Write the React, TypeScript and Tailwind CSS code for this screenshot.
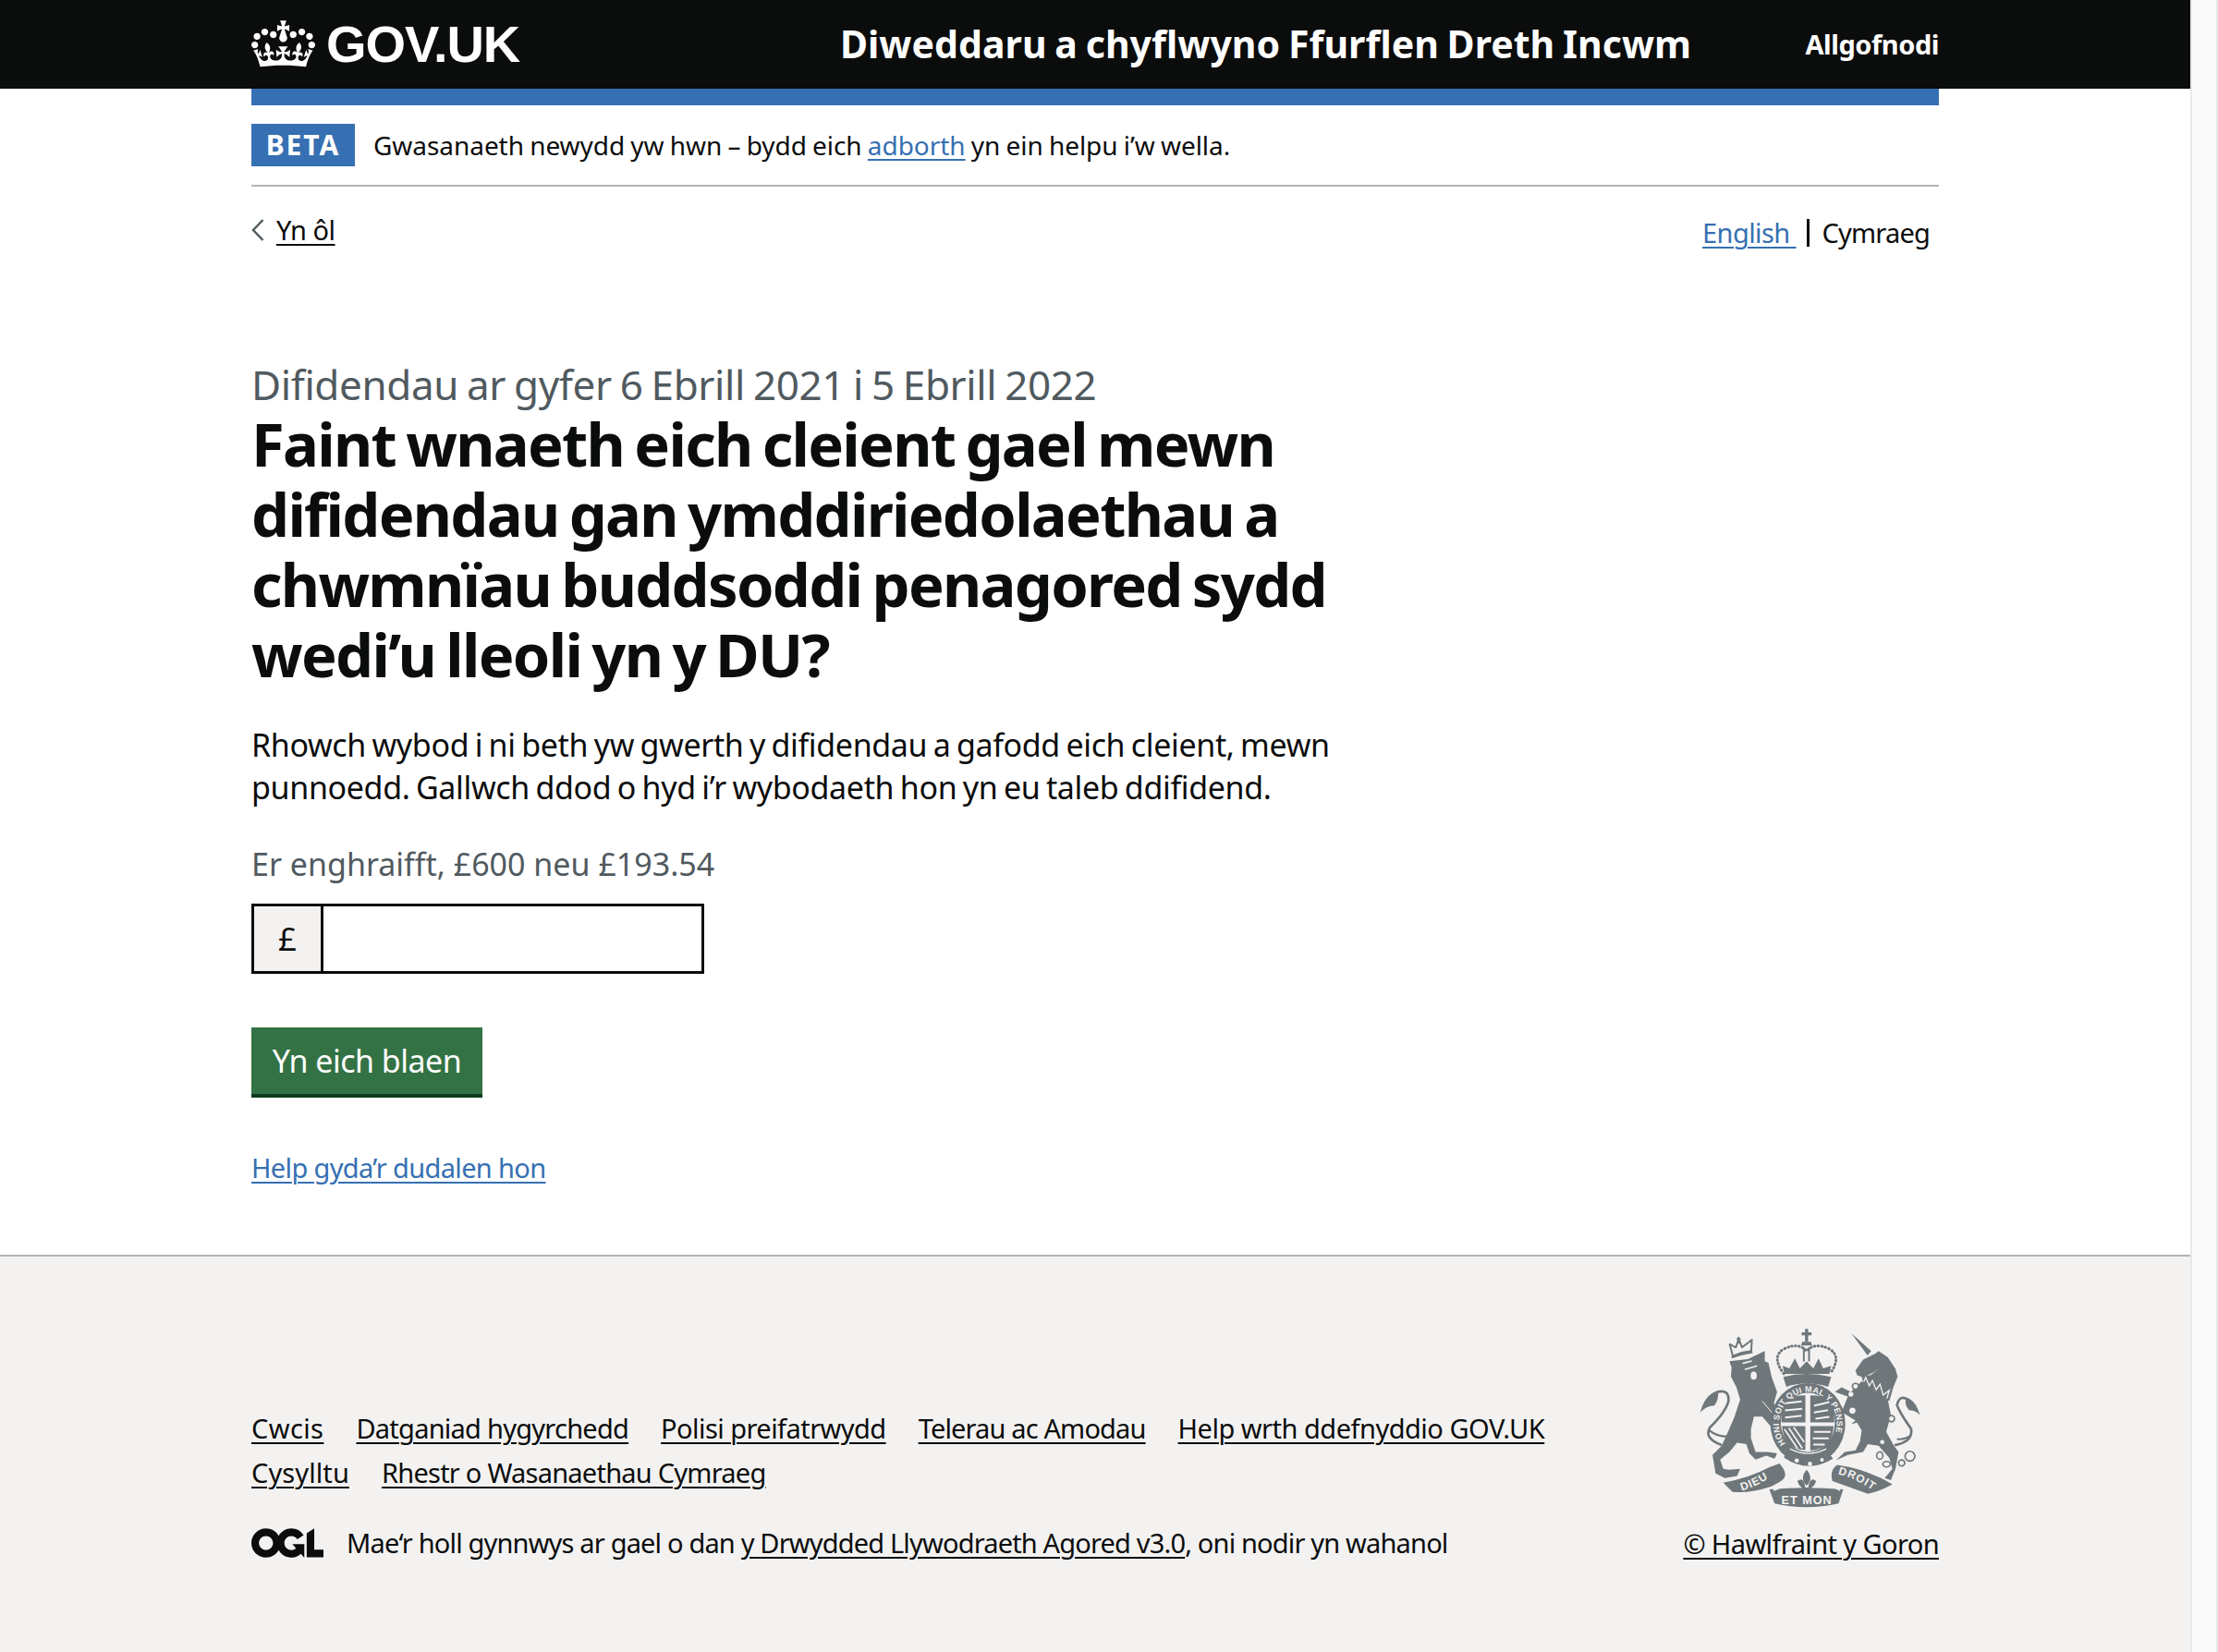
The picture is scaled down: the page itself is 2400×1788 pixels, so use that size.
import React from "react";

const FONT = "[font-family:'Noto_Sans',sans-serif]";

function Crown() {
  return (
    <svg viewBox="0 0 132 97" className="w-[69px] h-[51px] shrink-0 text-white" fill="currentColor" aria-hidden="true">
      <path d="M25 30.2c3.5 1.5 7.7-.2 9.1-3.7 1.5-3.6-.2-7.8-3.9-9.2-3.6-1.4-7.6.3-9.1 3.9-1.4 3.5.3 7.5 3.9 9zM9 39.5c3.6 1.5 7.8-.2 9.2-3.7 1.5-3.6-.2-7.8-3.9-9.1-3.6-1.5-7.6.2-9.1 3.8-1.4 3.5.3 7.5 3.8 9zM4.4 57.2c3.5 1.5 7.7-.2 9.1-3.8 1.5-3.6-.2-7.7-3.9-9.1-3.5-1.5-7.6.3-9.1 3.8-1.4 3.5.3 7.6 3.9 9.1zm38.3-21.4c3.5 1.5 7.7-.2 9.1-3.8 1.5-3.6-.2-7.7-3.9-9.1-3.6-1.5-7.6.3-9.1 3.8-1.3 3.6.4 7.7 3.9 9.1zm64.4-5.6c-3.6 1.5-7.8-.2-9.1-3.7-1.5-3.6.2-7.8 3.8-9.2 3.6-1.4 7.7.3 9.2 3.9 1.3 3.5-.4 7.5-3.9 9zm15.9 9.3c-3.6 1.5-7.7-.2-9.1-3.7-1.5-3.6.2-7.8 3.7-9.1 3.6-1.5 7.7.2 9.2 3.8 1.5 3.5-.3 7.5-3.8 9zm4.7 17.7c-3.6 1.5-7.8-.2-9.2-3.8-1.5-3.6.2-7.7 3.9-9.1 3.6-1.5 7.7.3 9.2 3.8 1.3 3.5-.4 7.6-3.9 9.1zM89.3 35.8c-3.6 1.5-7.8-.2-9.2-3.8-1.4-3.6.2-7.7 3.9-9.1 3.6-1.5 7.7.3 9.2 3.8 1.4 3.6-.3 7.7-3.9 9.1zM69.7 17.7l8.9 4.7V9.3l-8.9 2.8c-.2-.3-.5-.6-.9-.9L72.4 0H59.6l3.5 11.2c-.3.3-.6.5-.9.9l-8.8-2.8v13.1l8.8-4.7c.3.3.6.7.9.9l-5 15.4v.1c-.2.8-.4 1.6-.4 2.4 0 4.1 3.1 7.5 7 8.1h.2c.3 0 .7.1 1 .1.4 0 .7 0 1-.1h.2c4-.6 7.1-4.1 7.1-8.1 0-.8-.1-1.7-.4-2.4V34l-5.1-15.4c.4-.2.7-.6 1-.9zM66 92.8c16.9 0 32.8 1.1 47.1 3.2 4-16.9 8.9-26.7 14-33.5l-9.6-3.4c1 4.9 1.1 7.2 0 10.2-1.5-1.4-3-4.3-4.2-8.7L108.6 76c2.8-2 5-3.2 7.5-3.3-4.4 9.4-10 11.9-13.6 11.2-4.3-.8-6.3-4.6-5.6-7.9 1-4.7 5.7-5.9 8-.5 4.3-8.7-3-11.4-7.6-8.8 7.1-7.2 7.9-13.5 2.1-21.1-8 6.1-8.1 12.3-4.5 20.8-4.7-5.4-12.1-2.5-9.5 6.2 3.4-5.2 7.9-2 7.2 3.1-.6 4.3-6.4 7.8-13.5 7.2-10.3-.9-10.9-8-11.2-13.8 2.5-.5 7.1 1.8 11 7.3L80.2 60c-4.1 4.4-8 5.3-12.3 5.4 1.4-4.4 8-11.6 8-11.6H55.5s6.4 7.2 7.9 11.6c-4.2-.1-8-1-12.3-5.4l1.4 16.4c3.9-5.5 8.5-7.7 10.9-7.3-.3 5.8-.9 12.8-11.1 13.8-7.2.6-12.9-2.9-13.5-7.2-.7-5 3.8-8.3 7.1-3.1 2.7-8.7-4.6-11.6-9.4-6.2 3.7-8.5 3.6-14.7-4.6-20.8-5.8 7.6-5 13.9 2.2 21.1-4.7-2.6-11.9.1-7.7 8.8 2.3-5.5 7.1-4.2 8.1.5.7 3.3-1.3 7.1-5.7 7.9-3.5.7-9-1.8-13.5-11.2 2.5.1 4.7 1.3 7.5 3.3l-4.7-15.4c-1.2 4.4-2.7 7.2-4.3 8.7-1.1-3-.9-5.3 0-10.2l-9.5 3.4c5 6.9 9.9 16.7 14 33.5 14.8-2.1 30.8-3.2 47.7-3.2z" />
    </svg>
  );
}

function Ogl() {
  return (
    <svg viewBox="0 0 483.2 195.7" className="w-[78px] h-[32px] shrink-0 text-[#0b0c0c]" fill="currentColor" aria-hidden="true">
      <path d="M421.5 142.8V.1l-50.7 32.3v161.1h112.4v-50.7zm-122.3-9.6A47.12 47.12 0 0 1 221 97.8c0-26 21.1-47.1 47.1-47.1 16.7 0 31.4 8.7 39.7 21.8l42.7-27.2A97.63 97.63 0 0 0 268.1 0c-36.5 0-68.3 20.1-85.1 49.7A98 98 0 0 0 97.8 0C43.9 0 0 43.9 0 97.8s43.9 97.8 97.8 97.8c36.5 0 68.3-20.1 85.1-49.7a97.76 97.76 0 0 0 149.6 25.4l19.4 22.2h3v-87.8h-80l24.3 27.5zM97.8 145c-26 0-47.1-21.1-47.1-47.1s21.1-47.1 47.1-47.1 47.2 21 47.2 47S123.8 145 97.8 145" />
    </svg>
  );
}

function RoyalArms() {
  const g = "#6f777b";
  const bg = "#f3f2f1";
  const fam = "Liberation Sans, sans-serif";
  return (
    <svg viewBox="118 76 718 586" className="w-[239px] h-[195px] shrink-0 mr-[20px]" aria-hidden="true">
      {/* lion, coordinates of the left half */}
      <g transform="translate(90 60)">
        <path d="M136 108 L126 70 L146 80 L155 52 L166 80 L190 62 L198 55 L196 92 Q165 95 136 108 Z" fill="none" stroke={g} strokeWidth="6" strokeLinejoin="round" />
        <path d="M155 45 V68 M148 52 H162" stroke={g} strokeWidth="5" fill="none" />
        <path d="M132 113 Q165 100 200 95" fill="none" stroke={g} strokeWidth="7" />
        <path fill={g} d="M125 125 L185 118 L240 92 L240 125 L252 130 L262 175 L280 225 L270 260 L300 340 L305 375 L280 370 L262 340 L232 305 L205 305 L195 345 L195 375 L210 420 L250 420 L280 425 L272 442 L245 432 L210 445 L190 425 L180 395 L150 390 L125 420 L95 445 L105 475 L125 478 L160 475 L150 498 L110 505 L80 490 L70 430 L100 400 L118 360 L140 310 L160 250 L148 210 L130 175 L132 145 Z" />
        <path d="M168 132 L198 124 M175 152 L215 140" stroke={bg} strokeWidth="5" fill="none" />
        <ellipse cx="204" cy="172" rx="10" ry="13" fill={bg} />
        <path d="M232 255 L270 300 M268 300 L300 345" stroke={bg} strokeWidth="3" fill="none" />
        <path d="M100 398 Q40 375 62 340 Q112 292 122 255 Q125 215 85 225" fill="none" stroke={g} strokeWidth="8" />
        <path d="M60 350 Q85 372 125 370" fill="none" stroke={g} strokeWidth="7" />
        <path fill={g} d="M88 220 Q45 232 30 292 Q50 270 75 270 Q92 250 88 220 Z" />
      </g>

      {/* crown over the shield */}
      <path d="M466 80 V122 M450 96 H482" stroke={g} strokeWidth="10" fill="none" />
      <path d="M452 122 H480 L484 134 H448 Z" fill={g} />
      <path d="M392 226 Q350 170 392 145 Q440 122 466 152 Q492 122 540 145 Q582 170 542 226" fill="none" stroke={g} strokeWidth="9" strokeDasharray="2 10" strokeLinecap="round" />
      <path d="M457 140 V186 M474 140 V186" stroke={g} strokeWidth="6" />
      <path fill={g} d="M394 226 L388 200 L410 208 L428 176 L444 208 L466 186 L488 208 L505 176 L520 208 L546 200 L540 226 Z" />
      <path fill={g} d="M390 236 Q465 216 546 236 L536 268 Q465 246 400 268 Z" />

      {/* garter and shield */}
      <ellipse cx="470" cy="388" rx="122" ry="132" fill={g} />
      <ellipse cx="470" cy="384" rx="88" ry="96" fill={bg} />
      <path fill={g} d="M390 312 Q420 296 462 296 V384 H384 Q384 340 390 312 Z M478 296 Q520 296 548 312 Q556 340 556 384 H478 Z M386 396 H462 V474 Q425 474 402 448 Q388 425 386 396 Z M478 396 H554 Q552 425 538 448 Q515 474 478 476 Z" />
      <path d="M398 322 L450 316 M396 345 L452 340 M396 368 L450 362 M490 330 L540 318 M490 352 L536 344 M495 372 L540 366 M490 415 H544 M486 436 H538 M488 456 H525" stroke={bg} strokeWidth="6" fill="none" />
      <path d="M408 402 L452 468 M394 406 L436 468 M424 400 L458 448" stroke={bg} strokeWidth="5" fill="none" />
      <path id="garter" d="M398 453 A94 102 0 1 1 542 453" fill="none" />
      <text fontFamily={fam} fontWeight="700" fontSize="27" fill={bg} letterSpacing="1">
        <textPath href="#garter" startOffset="0%">HONI SOIT QUI MAL Y PENSE</textPath>
      </text>
      <path fill={g} d="M402 476 Q470 512 534 478 L552 502 Q470 552 392 498 Z" />
      <circle cx="434" cy="508" r="7" fill={bg} /><circle cx="477" cy="519" r="7" fill={bg} /><circle cx="516" cy="506" r="6" fill={bg} />
      <path d="M412 470 Q470 500 530 470" stroke={bg} strokeWidth="4" fill="none" />

      {/* unicorn, coordinates of the right half */}
      <g transform="translate(450 60)">
        <path fill={g} d="M162 35 L226 92 L214 106 Z" />
        <path fill={g} d="M175 155 L200 120 L240 100 L250 92 L280 112 L305 150 L312 175 L298 210 L285 255 L200 195 L195 175 L225 170 L255 145 L235 160 L200 178 L180 170 Z" />
        <path fill={g} d="M195 190 L280 250 L290 300 L275 355 L300 400 L315 420 L305 475 L290 512 L270 505 L295 475 L285 440 L250 400 L215 395 L200 420 L150 430 L112 447 L140 420 L175 415 L190 385 L195 350 L180 325 L160 330 L175 318 L130 290 L150 240 L108 225 L130 210 L160 225 Z" />
        <path d="M202 192 L208 178 L220 205 L230 188 L242 218 L255 200 L265 235 L285 220 L277 246" stroke={bg} strokeWidth="4" fill="none" />
        <circle cx="175" cy="207" r="10" fill={bg} stroke={g} strokeWidth="5" />
        <circle cx="160" cy="232" r="8" fill={bg} />
        <circle cx="165" cy="286" r="10" fill={bg} />
        <circle cx="292" cy="312" r="10" fill={bg} stroke={g} strokeWidth="5" />
        <circle cx="284" cy="354" r="7" fill={bg} />
        <circle cx="262" cy="388" r="7" fill={bg} />
        <g fill="none" stroke={g} strokeWidth="5">
          <ellipse cx="254" cy="432" rx="10" ry="12" />
          <ellipse cx="276" cy="460" rx="12" ry="9" />
          <ellipse cx="325" cy="456" rx="10" ry="10" />
          <circle cx="352" cy="434" r="16" />
        </g>
        <path d="M302 398 Q362 388 356 345 Q320 295 310 268 Q318 232 345 250" fill="none" stroke={g} strokeWidth="8" />
        <path d="M310 378 Q335 382 356 365" fill="none" stroke={g} strokeWidth="6" />
        <path fill={g} d="M340 243 Q372 252 384 300 Q368 283 350 285 Q332 265 340 243 Z" />
        {/* droit ribbon */}
        <path fill={g} d="M115 462 Q210 475 295 525 Q250 550 215 556 L100 515 Q90 480 115 462 Z" />
      </g>

      {/* motto */}
      <g transform="translate(90 60)">
        <path fill={g} d="M105 520 Q190 505 255 470 L288 458 Q325 500 288 518 L262 532 Q190 556 135 550 Z" />
      </g>
      <path fill={g} d="M345 602 Q465 592 585 602 L570 648 Q465 672 362 648 Z" />
      <path d="M358 604 Q392 596 402 566 M575 604 Q540 590 534 560" stroke={bg} strokeWidth="6" fill="none" />
      <path id="m1" d="M255 606 Q310 590 358 554" fill="none" />
      <path id="m2" d="M568 553 Q630 566 690 612" fill="none" />
      <text fontFamily={fam} fontWeight="700" fontSize="36" fill={bg} letterSpacing="3"><textPath href="#m1">DIEU</textPath></text>
      <text fontFamily={fam} fontWeight="700" fontSize="36" fill={bg} letterSpacing="3"><textPath href="#m2">DROIT</textPath></text>
      <text x="384" y="651" fontFamily={fam} fontWeight="700" fontSize="38" letterSpacing="3" fill={bg}>ET MON</text>
      <path fill={g} d="M466 538 Q490 565 466 590 Q442 565 466 538 Z M436 575 Q455 558 462 595 Q445 602 436 575 Z M497 575 Q478 558 471 595 Q488 602 497 575 Z M450 596 H482 V602 H450 Z M460 602 H472 L466 614 Z" />
    </svg>
  );
}

const link = "underline underline-offset-[4px] decoration-[2px]";
const footerLink = "text-[29px] leading-[48px] text-[#0b0c0c] whitespace-nowrap " + link;

export default function App() {
  return (
    <div className={`flex w-full min-h-[1788px] bg-white text-[#0b0c0c] ${FONT}`}>
      <div className="flex flex-col w-[2370px] shrink-0">
        <header className="bg-[#0b0c0c] h-[96px] shrink-0 text-white pl-[272px] pr-[272px] flex items-center">
          <div className="flex items-center gap-[12px] w-[637px] shrink-0 pb-[1px]">
            <Crown />
            <span className="font-bold text-[56px] leading-none [font-family:'Liberation_Sans',sans-serif] tracking-[-1.1px]">GOV.UK</span>
          </div>
          <span className="font-bold text-[41px] tracking-[0.05px] [word-spacing:-2px] whitespace-nowrap">Diweddaru a chyflwyno Ffurflen Dreth Incwm</span>
          <span className="font-bold text-[29px] ml-auto whitespace-nowrap tracking-[-0.45px]">Allgofnodi</span>
        </header>

        <main className="px-[272px] flex-1">
          <div className="h-[18px] bg-[#3670b2]" />
          <div className="flex items-center h-[88px] border-b-[2px] border-[#b1b4b6]">
            <strong className="bg-[#3670b2] text-white font-bold text-[30px] leading-none tracking-[2px] w-[112px] h-[46px] flex items-center justify-center">BETA</strong>
            <p className="ml-[20px] text-[28px] tracking-[-0.05px] [word-spacing:-1px]">
              Gwasanaeth newydd yw hwn – bydd eich <a className={`text-[#3670b2] ${link}`}>adborth</a> yn ein helpu i’w wella.
            </p>
          </div>
          <div className="flex justify-between items-start pt-[26px]">
            <a className="flex items-center text-[29px] leading-[42px] tracking-[-0.5px]">
              <svg viewBox="0 0 14 24" className="w-[14px] h-[24px] mr-[13px]" fill="none" stroke="#505a5f" strokeWidth="2.4"><path d="M12.5 1 L2 12 L12.5 23" /></svg>
              <span className={link}>Yn ôl</span>
            </a>
            <div className="flex items-center text-[29px] leading-[42px] pt-[3px] pr-[10px]">
              <a className={`text-[#3670b2] tracking-[-0.6px] ${link}`}>English&nbsp;</a>
              <span className="ml-[11px] mr-[14px] w-[3px] h-[30px] bg-[#0b0c0c]" />
              <span className="tracking-[-0.8px]">Cymraeg</span>
            </div>
          </div>

          <p className="text-[44px] leading-[52px] text-[#505a5f] mt-[117px] tracking-[-0.4px] [word-spacing:-2px]">Difidendau ar gyfer 6 Ebrill 2021 i 5 Ebrill 2022</p>
          <h1 className="text-[65px] leading-[76px] font-bold w-[1230px] tracking-[-1.7px] [word-spacing:-4px]">
            Faint wnaeth eich cleient gael mewn difidendau gan ymddiriedolaethau a chwmnïau buddsoddi penagored sydd wedi’u lleoli yn y DU?
          </h1>
          <p className="text-[34px] leading-[46px] w-[1230px] mt-[37px] tracking-[-0.35px] [word-spacing:-2px]">
            Rhowch wybod i ni beth yw gwerth y difidendau a gafodd eich cleient, mewn punnoedd. Gallwch ddod o hyd i’r wybodaeth hon yn eu taleb ddifidend.
          </p>
          <p className="text-[34px] leading-[46px] text-[#505a5f] mt-[37px]">Er enghraifft, £600 neu £193.54</p>
          <div className="flex w-[490px] h-[76px] border-[3px] border-[#0b0c0c] mt-[20px]">
            <div className="w-[75px] bg-[#f3f2f1] border-r-[3px] border-[#0b0c0c] flex items-center justify-center text-[35px]">£</div>
            <div className="flex-1 bg-white" />
          </div>
          <button className="block mt-[58px] w-[250px] h-[76px] bg-[#337244] border-b-[4px] border-[#0f3a1e] text-white text-[34px] leading-none tracking-[-0.5px]">Yn eich blaen</button>
          <a className={`inline-block text-[29px] leading-[42px] mt-[55px] text-[#3670b2] tracking-[-0.65px] ${link}`}>Help gyda’r dudalen hon</a>
        </main>

        <footer className="h-[430px] shrink-0 bg-[#f3f2f1] border-t-[2px] border-[#b1b4b6] px-[272px] pt-[77px] flex justify-between">
          <div className="flex flex-col pt-[85px]">
            <div className="flex gap-x-[35px]">
              <a className={`${footerLink} tracking-[0.4px]`}>Cwcis</a>
              <a className={`${footerLink} tracking-[-0.75px]`}>Datganiad hygyrchedd</a>
              <a className={`${footerLink} tracking-[-0.55px]`}>Polisi preifatrwydd</a>
              <a className={`${footerLink} tracking-[-0.85px]`}>Telerau ac Amodau</a>
              <a className={`${footerLink} tracking-[-0.5px]`}>Help wrth ddefnyddio GOV.UK</a>
            </div>
            <div className="flex gap-x-[35px]">
              <a className={`${footerLink} tracking-[0.1px]`}>Cysylltu</a>
              <a className={`${footerLink} tracking-[-0.76px]`}>Rhestr o Wasanaethau Cymraeg</a>
            </div>
            <div className="flex items-center mt-[31px] text-[29px] leading-[42px] tracking-[-0.83px] whitespace-nowrap">
              <Ogl />
              <p className="ml-[25px]">Mae‘r holl gynnwys ar gael o dan <a className={link}>y Drwydded Llywodraeth Agored v3.0</a>, oni nodir yn wahanol</p>
            </div>
          </div>
          <div className="flex flex-col items-end">
            <RoyalArms />
            <a className={`mt-[18px] text-[29px] leading-[42px] tracking-[-0.6px] whitespace-nowrap ${link}`}>© Hawlfraint y Goron</a>
          </div>
        </footer>
      </div>
      <aside className="flex-1 bg-[#fafafa] border-l-[2px] border-r-[2px] border-[#e8e8e8]" />
    </div>
  );
}
